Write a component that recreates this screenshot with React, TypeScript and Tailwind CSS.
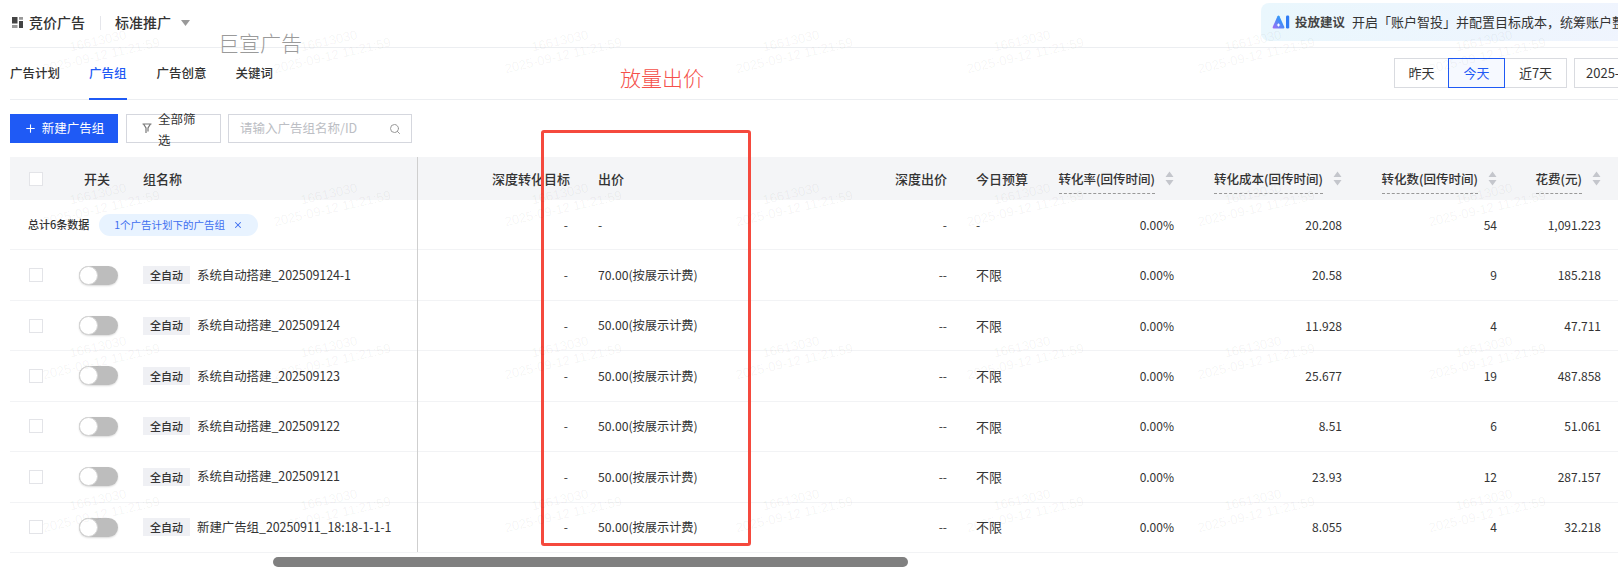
import { Plus, Search, X } from "lucide-react";

const ROWS = [
    { name: "系统自动搭建_202509124-1", price: "70.00(按展示计费)", cost: "20.58", count: "9", spend: "185.218" },
    { name: "系统自动搭建_202509124", price: "50.00(按展示计费)", cost: "11.928", count: "4", spend: "47.711" },
    { name: "系统自动搭建_202509123", price: "50.00(按展示计费)", cost: "25.677", count: "19", spend: "487.858" },
    { name: "系统自动搭建_202509122", price: "50.00(按展示计费)", cost: "8.51", count: "6", spend: "51.061" },
    { name: "系统自动搭建_202509121", price: "50.00(按展示计费)", cost: "23.93", count: "12", spend: "287.157" },
    { name: "新建广告组_20250911_18:18-1-1-1", price: "50.00(按展示计费)", cost: "8.055", count: "4", spend: "32.218" },
];

const GRID = "grid grid-cols-[62px_61px_284px_167px_196px_181px_79px_148px_168px_155px_104px_1fr]";
const WATERMARKS = Array.from({ length: 32 }, (_, i) => i);

function Checkbox() {
    return <span className="block w-[14px] h-[14px] border border-[#e3e4e8] bg-white" />;
}

function SortHeader({ label }: { label: string }) {
    return (
        <div className="flex items-center justify-end gap-[10px] pr-[14px]">
            <span className="border-b border-dashed border-[#999] text-[12.5px] leading-[20px] mt-[5px] pb-[4px]">{label}</span>
            <svg width="9" height="15" viewBox="0 0 9 15" className="text-[#c4c6cc] shrink-0">
                <path d="M4.5 0.5 L8.5 6 H0.5 Z M0.5 9 H8.5 L4.5 14.5 Z" fill="currentColor" />
            </svg>
        </div>
    );
}

function Row({ children }: { children: React.ReactNode }) {
    return <div className={`${GRID} items-center flex-1 border-b border-[#f2f3f5] text-[12px] text-[#333]`}>{children}</div>;
}

export default function App() {
    return (
        <div className="relative w-[1618px] h-[571px] overflow-hidden bg-white text-[#333] font-['Noto_Sans_CJK_SC','Liberation_Sans',sans-serif]">

            {/* Top bar */}
            <div className="relative flex items-center h-[48px] ml-[10px] border-b border-[#eceef1] pb-[2px]">
                <svg width="11" height="11" viewBox="0 0 11 11" className="ml-[2px]">
                    <path d="M0 0H5.5V6.5H0Z M7 4H11V11H7Z" fill="#444" />
                    <path d="M7 0H11V2.8H7Z M0 8H5.5V11H0Z" fill="#999" />
                </svg>
                <span className="ml-[6px] text-[14px] font-medium">竞价广告</span>
                <span className="ml-[15px] w-px h-[14px] bg-[#e5e6eb]" />
                <span className="ml-[14px] text-[14px] font-medium">标准推广</span>
                <svg width="9" height="6" viewBox="0 0 9 6" className="ml-[10px] text-[#999]">
                    <path d="M0 0H9L4.5 6Z" fill="currentColor" />
                </svg>
                <span className="absolute left-[208px] top-[28px] text-[21px] leading-[28px] font-light text-[#9a9a9a]">巨宣广告</span>
                <div className="absolute left-[1251px] top-[3px] w-[400px] h-[38px] rounded-lg bg-gradient-to-r from-[#eaf7fd] to-[#f0f4fe] flex items-center pl-[11px] whitespace-nowrap text-[13px]">
                    <svg width="18" height="14" viewBox="0 0 17 14" className="shrink-0">
                        <defs>
                            <linearGradient id="ai" x1="0" y1="1" x2="1" y2="0">
                                <stop offset="0" stopColor="#a86cf5" />
                                <stop offset="0.6" stopColor="#3f8ff7" />
                                <stop offset="1" stopColor="#2fb5f5" />
                            </linearGradient>
                        </defs>
                        <path d="M5 1.2 Q6 -0.2 7 1.2 L11.8 12 Q12.2 13.5 10.8 13.5 H1.2 Q-0.2 13.5 0.2 12 Z" fill="url(#ai)" />
                        <path d="M4.4 10 H7.6 M6 8.4 V11.6" stroke="#fff" strokeWidth="1.2" />
                        <rect x="13.5" y="0.5" width="3.2" height="13" rx="1.2" fill="#2f7bf5" />
                    </svg>
                    <span className="ml-[5px] text-[12.5px] font-bold text-[#444]">投放建议</span>
                    <span className="ml-[7px]">开启「账户智投」并配置目标成本，统筹账户整体投放</span>
                </div>
            </div>

            {/* Tabs */}
            <div className="relative flex items-center h-[52px] ml-[10px] border-b border-[#eceef1] text-[12.5px] font-medium">
                <span>广告计划</span>
                <span className="relative ml-[29px] h-full flex items-center text-[#1f5af5]">
                    广告组
                    <span className="absolute left-0 right-0 bottom-[-1px] h-[2px] bg-[#1f5af5]" />
                </span>
                <span className="ml-[30px]">广告创意</span>
                <span className="ml-[29px]">关键词</span>
                <span className="absolute left-[610px] top-[15px] text-[21px] leading-[28px] font-light text-[#f5504a]">放量出价</span>
                <div className="absolute left-[1384px] top-[10px] flex h-[30px] font-normal text-[13px]">
                    <span className="w-[55px] flex items-center justify-center border border-[#d9dbe0]">昨天</span>
                    <span className="w-[57px] -ml-px flex items-center justify-center border border-[#1f5af5] text-[#1f5af5] bg-[#f6f9ff] relative">今天</span>
                    <span className="w-[62px] flex items-center justify-center border border-l-0 border-[#d9dbe0]">近7天</span>
                    <span className="ml-[7px] w-[200px] pl-[11px] flex items-center border border-[#d9dbe0] whitespace-nowrap">2025-09-12</span>
                </div>
            </div>

            {/* Toolbar */}
            <div className="flex items-start h-[57px] pt-[14px] pl-[10px] text-[12.5px]">
                <button type="button" className="flex items-center justify-center gap-[5px] w-[108px] h-[29px] bg-[#1f5af5] text-white">
                    <Plus size={13} /> 新建广告组
                </button>
                <div className="flex items-center w-[95px] h-[29px] ml-[8px] pl-[15px] border border-[#d5d7de]">
                    <svg width="10" height="11" viewBox="0 0 10 11" fill="none" stroke="#777" strokeWidth="1.2" className="shrink-0">
                        <path d="M0.5 1H9.5 M1.5 1L4 5V10 M8.5 1L6 5V8.5" />
                    </svg>
                    <span className="ml-[6px] w-[38px] leading-[21px] break-all">全部筛选</span>
                </div>
                <div className="flex items-center justify-between w-[184px] h-[29px] ml-[7px] pl-[11px] pr-[10px] border border-[#d5d7de] text-[#bcbec4]">
                    <span>请输入广告组名称/ID</span>
                    <Search size={12} className="text-[#999]" />
                </div>
            </div>

            {/* Table */}
            <div className="relative ml-[10px] h-[396px] flex flex-col">
                <span className="absolute left-[407px] top-0 bottom-[1px] w-px bg-[#cfcfcf]" />
                <div className={`${GRID} items-center h-[43px] bg-[#f4f5f7] text-[13px] font-medium shrink-0`}>
                    <div className="pl-[19px]"><Checkbox /></div>
                    <div className="pl-[12px]">开关</div>
                    <div className="pl-[10px]">组名称</div>
                    <div className="pr-[14px] text-right">深度转化目标</div>
                    <div className="pl-[14px]">出价</div>
                    <div className="pr-[14px] text-right">深度出价</div>
                    <div className="pl-[15px]">今日预算</div>
                    <SortHeader label="转化率(回传时间)" />
                    <SortHeader label="转化成本(回传时间)" />
                    <SortHeader label="转化数(回传时间)" />
                    <SortHeader label="花费(元)" />
                    <div />
                </div>

                <Row>
                    <div className="col-span-3 flex items-center pl-[18px]">
                        <span className="text-[11px] font-medium">总计6条数据</span>
                        <span className="flex items-center ml-[10px] h-[22px] w-[159px] pl-[15px] rounded-full bg-[#e8f3ff] text-[10.5px] text-[#3f6ff0]">
                            1个广告计划下的广告组
                            <X size={10} strokeWidth={2.5} className="ml-[8px]" />
                        </span>
                    </div>
                    <div className="pr-[16px] text-right">-</div>
                    <div className="pl-[14px]">-</div>
                    <div className="pr-[14px] text-right">-</div>
                    <div className="pl-[15px]">-</div>
                    <div className="pr-[14px] text-right">0.00%</div>
                    <div className="pr-[14px] text-right">20.208</div>
                    <div className="pr-[14px] text-right">54</div>
                    <div className="pr-[14px] text-right">1,091.223</div>
                    <div />
                </Row>

                {ROWS.map(r => (
                    <Row key={r.name}>
                        <div className="pl-[19px]"><Checkbox /></div>
                        <div className="pl-[7px]">
                            <span className="flex w-[39px] h-[19px] rounded-full bg-[#bdbdbd] shadow-[0_1px_2px_rgba(0,0,0,0.15)]">
                                <span className="block w-[19px] h-[19px] rounded-full bg-white border border-[#d5d5d5]" />
                            </span>
                        </div>
                        <div className="pl-[10px] flex items-center whitespace-nowrap">
                            <span className="flex items-center justify-center w-[47px] h-[18px] bg-[#eff0f4] text-[11px] font-medium">全自动</span>
                            <span className="ml-[7px] text-[12.5px] tracking-[-0.1px]">{r.name}</span>
                        </div>
                        <div className="pr-[16px] text-right">-</div>
                        <div className="pl-[14px] text-[12.2px]">{r.price}</div>
                        <div className="pr-[14px] text-right">--</div>
                        <div className="pl-[15px] text-[13px]">不限</div>
                        <div className="pr-[14px] text-right">0.00%</div>
                        <div className="pr-[14px] text-right">{r.cost}</div>
                        <div className="pr-[14px] text-right">{r.count}</div>
                        <div className="pr-[14px] text-right">{r.spend}</div>
                        <div />
                    </Row>
                ))}
            </div>

            {/* Scrollbar */}
            <div className="h-[10px] w-[635px] ml-[273px] mt-[4px] rounded-full bg-[#808080]" />

            {/* Red annotation frame */}
            <div className="absolute left-[541px] top-[130px] w-[210px] h-[416px] border-[3px] border-[#f5493d] rounded-[3px] pointer-events-none" />

            {/* Watermark */}
            <div className="absolute left-[-16px] top-[-29px] grid grid-cols-[repeat(8,231px)] auto-rows-[153px] pointer-events-none">
                {WATERMARKS.map(i => (
                    <div key={i} className="flex flex-col items-center justify-center -rotate-[13deg] text-[13px] leading-[15px] text-black/[0.05] font-['Liberation_Sans',sans-serif]">
                        <span>16613030</span>
                        <span>2025-09-12 11:21:59</span>
                    </div>
                ))}
            </div>
        </div>
    );
}
